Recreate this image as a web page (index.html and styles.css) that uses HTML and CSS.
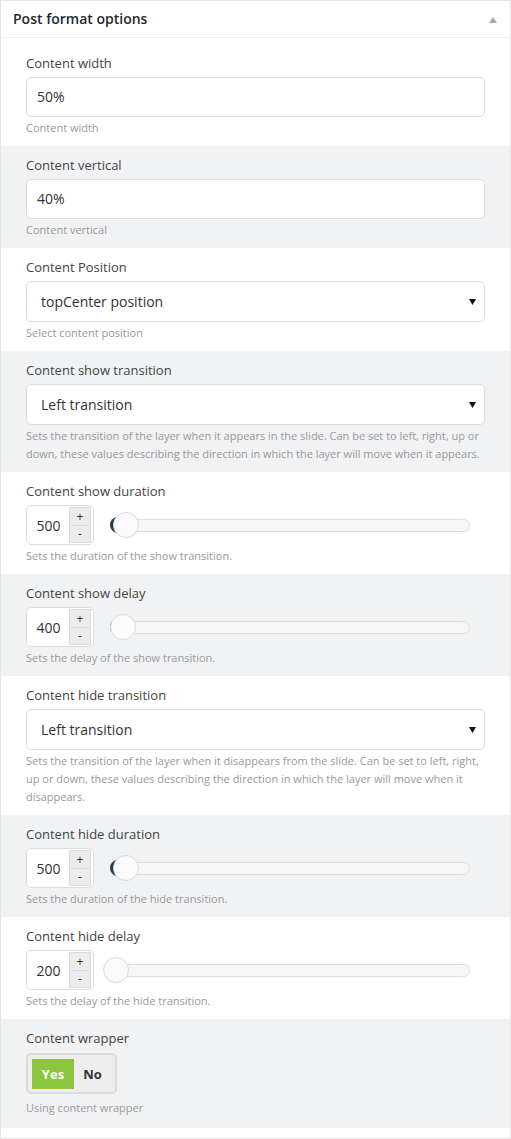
FILE: index.html
```html
<!DOCTYPE html>
<html>
<head>
<meta charset="utf-8">
<title>Post format options</title>
<link rel="stylesheet" href="styles.css">
</head>
<body>
<div class="panel">
  <div class="panel-head">
    <h2 class="panel-title">Post format options</h2>
    <span class="head-arrow"></span>
  </div>
  <div class="panel-body">
    <div class="field">
      <div class="label">Content width</div>
      <div class="text-input">50%</div>
      <p class="desc">Content width</p>
    </div>
    <div class="field alt">
      <div class="label">Content vertical</div>
      <div class="text-input">40%</div>
      <p class="desc">Content vertical</p>
    </div>
    <div class="field">
      <div class="label">Content Position</div>
      <div class="select">topCenter position<svg class="select-arrow" width="7" height="6" viewBox="0 0 7 6"><polygon points="0,0 7,0 3.5,6" fill="#111"/></svg></div>
      <p class="desc">Select content position</p>
    </div>
    <div class="field alt">
      <div class="label">Content show transition</div>
      <div class="select">Left transition<svg class="select-arrow" width="7" height="6" viewBox="0 0 7 6"><polygon points="0,0 7,0 3.5,6" fill="#111"/></svg></div>
      <p class="desc">Sets the transition of the layer when it appears in the slide. Can be set to left, right, up or down, these values describing the direction in which the layer will move when it appears.</p>
    </div>
    <div class="field">
      <div class="label">Content show duration</div>
      <div class="number-row">
        <div class="spinner"><span class="spin-value">500</span><span class="spin-btns"><span class="spin-btn">+</span><span class="spin-btn">-</span></span></div>
        <div class="slider"><div class="slider-track"><div class="slider-range" style="width:4.3%"></div><div class="slider-handle" style="left:4.3%"></div></div></div>
      </div>
      <p class="desc">Sets the duration of the show transition.</p>
    </div>
    <div class="field alt">
      <div class="label">Content show delay</div>
      <div class="number-row">
        <div class="spinner"><span class="spin-value">400</span><span class="spin-btns"><span class="spin-btn">+</span><span class="spin-btn">-</span></span></div>
        <div class="slider"><div class="slider-track"><div class="slider-range" style="width:3.3%"></div><div class="slider-handle" style="left:3.3%"></div></div></div>
      </div>
      <p class="desc">Sets the delay of the show transition.</p>
    </div>
    <div class="field">
      <div class="label">Content hide transition</div>
      <div class="select">Left transition<svg class="select-arrow" width="7" height="6" viewBox="0 0 7 6"><polygon points="0,0 7,0 3.5,6" fill="#111"/></svg></div>
      <p class="desc">Sets the transition of the layer when it disappears from the slide. Can be set to left, right, up or down, these values describing the direction in which the layer will move when it disappears.</p>
    </div>
    <div class="field alt">
      <div class="label">Content hide duration</div>
      <div class="number-row">
        <div class="spinner"><span class="spin-value">500</span><span class="spin-btns"><span class="spin-btn">+</span><span class="spin-btn">-</span></span></div>
        <div class="slider"><div class="slider-track"><div class="slider-range" style="width:4.3%"></div><div class="slider-handle" style="left:4.3%"></div></div></div>
      </div>
      <p class="desc">Sets the duration of the hide transition.</p>
    </div>
    <div class="field">
      <div class="label">Content hide delay</div>
      <div class="number-row">
        <div class="spinner"><span class="spin-value">200</span><span class="spin-btns"><span class="spin-btn">+</span><span class="spin-btn">-</span></span></div>
        <div class="slider"><div class="slider-track"><div class="slider-range" style="width:1.5%"></div><div class="slider-handle" style="left:1.5%"></div></div></div>
      </div>
      <p class="desc">Sets the delay of the hide transition.</p>
    </div>
    <div class="field alt field-switch">
      <div class="label">Content wrapper</div>
      <div class="switch"><span class="switch-opt on">Yes</span><span class="switch-opt">No</span></div>
      <p class="desc">Using content wrapper</p>
    </div>
  </div>
</div>
</body>
</html>
```
FILE: styles.css
```css
* { box-sizing: border-box; }
html, body { margin: 0; padding: 0; background: #fff; }
body {
  font-family: "Open Sans", "Noto Sans", sans-serif;
  color: #444;
  width: 511px;
}
.panel {
  width: 511px;
  border: 1px solid #e5e5e5;
  background: #fff;
}
.panel-head {
  height: 37px;
  border-bottom: 1px solid #eee;
  display: flex;
  align-items: center;
  justify-content: space-between;
  padding: 0 13px 0 12px;
}
.panel-title {
  margin: 0;
  font-size: 14px;
  font-weight: 600;
  color: #23282d;
  line-height: 20px;
}
.head-arrow {
  width: 0;
  height: 0;
  border-left: 4px solid transparent;
  border-right: 4px solid transparent;
  border-bottom: 6px solid #a5a9ad;
  margin-top: 1px;
}
.panel-body {
  padding: 6px 0 10px;
}
.field {
  padding: 10px 25px 9px;
  background: #fff;
}
.field.alt { background: #f1f2f3; }
.label {
  font-size: 13px;
  line-height: 18px;
  color: #444;
  margin-bottom: 5px;
}
.text-input {
  height: 40px;
  border: 1px solid #ddd;
  border-radius: 5px;
  background: #fff;
  padding: 0 10px;
  font-size: 14px;
  line-height: 38px;
  color: #333;
}
.select {
  height: 41px;
  border: 1px solid #ddd;
  border-radius: 5px;
  background: #fff;
  padding: 0 8px 0 14px;
  font-size: 14px;
  line-height: 39px;
  color: #333;
  display: flex;
  justify-content: space-between;
  align-items: center;
}
.select-arrow { display: block; }
.desc {
  margin: 2px 0 0;
  font-size: 11px;
  line-height: 18px;
  color: #999;
}
.number-row {
  display: flex;
  align-items: center;
  height: 40px;
}
.spinner {
  width: 68px;
  height: 40px;
  border: 1px solid #ddd;
  border-radius: 5px;
  background: #fff;
  display: flex;
  align-items: stretch;
  padding: 1px 2px 1px 0;
}
.spin-value {
  flex: 1;
  font-size: 14px;
  color: #333;
  display: flex;
  align-items: center;
  justify-content: center;
  padding-left: 1px;
}
.spin-btns {
  width: 22px;
  display: flex;
  flex-direction: column;
  border: 1px solid #dcdcdc;
  background: #ececec;
}
.spin-btn {
  flex: 1;
  display: flex;
  align-items: center;
  justify-content: center;
  font-size: 12px;
  line-height: 15px;
  color: #333;
  overflow: hidden;
}
.spin-btn + .spin-btn { border-top: 1px solid #dcdcdc; }
.slider {
  flex: 1;
  margin: 0 15px 0 16px;
}
.slider-track {
  position: relative;
  height: 13px;
  border: 1px solid #dedede;
  border-radius: 7px;
  background: #f6f6f6;
}
.slider-range {
  position: absolute;
  left: -1px;
  top: 50%;
  height: 16px;
  margin-top: -8px;
  background: #1f3b57;
  border-radius: 8px 0 0 8px;
}
.slider-handle {
  position: absolute;
  top: 50%;
  width: 26px;
  height: 26px;
  margin: -13px 0 0 -13px;
  border-radius: 50%;
  background: #fbfbfb;
  border: 1px solid #d9d9d9;
}
.field-switch { padding-bottom: 11px; }
.field-switch .label { margin-bottom: 6px; }
.switch {
  display: inline-flex;
  border: 2px solid #dcdcdc;
  border-radius: 5px;
  background: #ededed;
  padding: 4px 4px 3px;
  height: 41px;
}
.switch-opt {
  display: flex;
  align-items: center;
  justify-content: center;
  font-size: 13px;
  font-weight: 700;
  color: #333;
  width: 37px;
}
.switch-opt.on {
  width: 42px;
  background: #8cc63f;
  color: #fff;
}
.field-switch .desc { margin-top: 5px; }
```
